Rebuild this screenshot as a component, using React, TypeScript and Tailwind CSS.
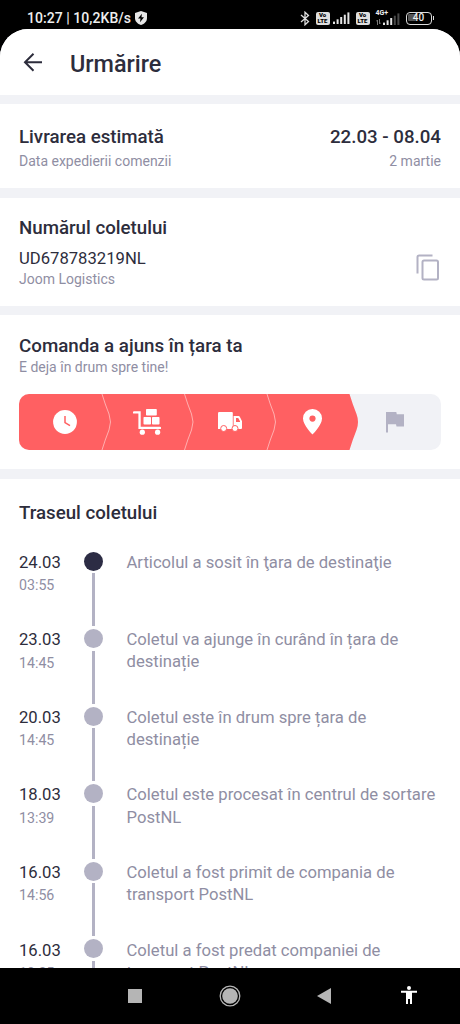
import React from 'react'

type TrackEvent = {
	date: string
	time: string
	text: string
	current?: boolean
}

const events: TrackEvent[] = [
	{ date: '24.03', time: '03:55', text: 'Articolul a sosit în ţara de destinaţie', current: true },
	{ date: '23.03', time: '14:45', text: 'Coletul va ajunge în curând în țara de destinație' },
	{ date: '20.03', time: '14:45', text: 'Coletul este în drum spre țara de destinație' },
	{ date: '18.03', time: '13:39', text: 'Coletul este procesat în centrul de sortare PostNL' },
	{ date: '16.03', time: '14:56', text: 'Coletul a fost primit de compania de transport PostNL' },
	{ date: '16.03', time: '10:35', text: 'Coletul a fost predat companiei de transport PostNL' },
]

const VoLte = () => (
	<div className="flex h-[13px] w-[14px] flex-col items-center justify-center rounded-[2px] bg-[#dedede] text-[6px] leading-[6px] font-black text-black">
		<span>Vo</span>
		<span>LTE</span>
	</div>
)

const Signal = ({ level }: { level: number }) => (
	<svg className="h-3 w-[17px]" viewBox="0 0 17 12" fill="#e4e4e4">
		{[0, 1, 2, 3, 4].map((i) => (
			<rect key={i} x={i * 3.6} y={9.6 - i * 2.3} width="2" height={2.4 + i * 2.3} opacity={i < level ? 1 : 0.32} />
		))}
	</svg>
)

const StatusBar = () => (
	<div className="flex h-[29px] items-end justify-between pr-[26px] pl-[27px] text-[#eee]">
		<div className="flex h-[22px] items-center">
			<span className="w-[104px] text-[14px] leading-4 font-medium whitespace-nowrap tracking-[0.05px]">10:27 | 10,2KB/s</span>
			<svg className="ml-[4px] h-[14px] w-3" viewBox="0 0 12 14">
				<path d="M6 0 12 2v5c0 3.500-2.500 5.800-6 7C2.500 12.800 0 10.500 0 7V2z" fill="#e8e8e8" />
				<path d="M6.900 2.800 3 7.600h2.500L5 11.200l4-5H6.500z" fill="#000" />
			</svg>
		</div>
		<div className="flex h-[22px] items-center">
			<svg className="mr-[2px] h-[15px] w-[10px]" viewBox="0 0 10 15" fill="none" stroke="#ddd" strokeWidth="1.300">
				<path d="M1 4l7.500 6.500L5 13.800V1.200l3.500 3.300L1 11" />
			</svg>
			<div className="ml-[4px]"><VoLte /></div>
			<div className="ml-[3px]"><Signal level={5} /></div>
			<div className="ml-[6px]"><VoLte /></div>
			<div className="relative ml-[6px] flex h-4 w-6 items-end justify-end">
				<span className="absolute top-0 left-0 text-[7px] leading-[6px] font-bold">4G+</span>
				<svg className="absolute bottom-[1px] left-0 h-1.5 w-[5px]" viewBox="0 0 5 6" stroke="#777" strokeWidth="1" fill="none">
					<path d="M1.500 6V1L0 2.500M3.500 0v5L5 3.500" />
				</svg>
				<div className="flex pb-px"><Signal level={3} /></div>
			</div>
			<div className="ml-[6px] flex items-center">
				<div className="relative flex h-[13px] w-[26px] items-center justify-center rounded-[4px] border-[1.5px] border-[#ddd]">
					<span className="absolute top-[1.5px] left-[1.5px] h-[7px] w-2 rounded-[1px] bg-[#555]" />
					<span className="relative text-[10px] leading-none font-medium">40</span>
				</div>
				<span className="ml-px h-1 w-[1.5px] bg-[#ddd]" />
			</div>
		</div>
	</div>
)

const Clock = () => (
	<svg className="size-6" viewBox="0 0 24 24">
		<circle cx="12" cy="12" r="11.900" fill="#fff" />
		<path d="M12 6v6.700l5 3" fill="none" stroke="#ff6062" strokeWidth="1.500" />
	</svg>
)

const Cart = () => (
	<svg className="h-[26px] w-7" viewBox="0 0 28 26" fill="#fff">
		<path d="M1 2.300h6.700V17.800H27a1 1 0 0 1 0 2.300H5.400V4.600H1a1 1 0 0 1 0-2.300z" />
		<rect x="13" y="0" width="10.800" height="6.500" rx=".8" />
		<rect x="10.500" y="8" width="7.500" height="7.500" rx=".8" />
		<rect x="19" y="8" width="7.500" height="7.500" rx=".8" />
		<circle cx="9.300" cy="23.200" r="2.600" />
		<circle cx="24.600" cy="23.200" r="2.600" />
	</svg>
)

const Truck = () => (
	<svg className="h-5 w-6" viewBox="0 0 24 20" fill="#fff">
		<path d="M1.200 0h12.600q1 0 1 1v16H0V1.200Q0 0 1.200 0z" />
		<path d="M15.600 4h5q.8 0 1.200.7l1.900 3.700q.3.500.3 1.100V16q0 1-1 1h-7.400z" />
		<path d="M18 6h2.200l1.800 3.300V10h-4z" fill="#ff6062" />
		<circle cx="5.700" cy="16.500" r="3" stroke="#ff6062" strokeWidth="1" />
		<circle cx="17" cy="16.500" r="3" stroke="#ff6062" strokeWidth="1" />
	</svg>
)

const Pin = () => (
	<svg className="h-[26px] w-[19px]" viewBox="0 0 19 26">
		<path d="M9.500 0A9.400 9.400 0 0 0 0 9.500C0 16.300 9.500 25.500 9.500 25.500S19 16.300 19 9.500A9.400 9.400 0 0 0 9.500 0z" fill="#fff" />
		<circle cx="9.500" cy="9.600" r="3.100" fill="#ff6062" />
	</svg>
)

const Flag = () => (
	<svg className="h-[21px] w-[18px]" viewBox="0 0 18 21" fill="#b3b2c4">
		<path d="M0 0h10.300l.5 2.200H18v12.300h-7.500l-.5-2.300H2V20.500H0z" />
	</svg>
)

const Progress = () => (
	<div className="relative mt-4 h-14 overflow-hidden rounded-[10px] bg-[#f1f2f6]">
		<svg className="absolute inset-0 h-14 w-[422px]" viewBox="0 0 422 56">
			<path d="M0 0H330.500Q333.500 10 337.500 20Q340.500 28 337.500 36Q333.500 46 330.500 56H0z" fill="#ff6062" />
			<g fill="none" stroke="#ffb0b0" strokeWidth="1">
				<path d="M83 0Q86 10 90 20Q93 28 90 36Q86 46 83 56" />
				<path d="M165.500 0Q168.500 10 172.500 20Q175.500 28 172.500 36Q168.500 46 165.500 56" />
				<path d="M248 0Q251 10 255 20Q258 28 255 36Q251 46 248 56" />
			</g>
		</svg>
		<div className="relative grid h-14 grid-cols-[82.600px_82.600px_82.600px_82.600px_82.600px] pl-[4.500px]">
			{[Clock, Cart, Truck, Pin, Flag].map((Icon, i) => (
				<div key={i} className="flex items-center justify-center"><Icon /></div>
			))}
		</div>
	</div>
)

const Row = ({ date, time, text, current }: TrackEvent) => (
	<li className="flex h-[77.600px] shrink-0">
		<div className="w-[65px] pt-[1.600px]">
			<p className="text-[16.650px] leading-[22px] text-[#2d2d3c]">{date}</p>
			<p className="mt-[0.500px] text-[14.200px] leading-[22px]">{time}</p>
		</div>
		<div className="flex w-[19px] flex-col items-center pt-[1.500px]">
			<span className={`size-[19px] shrink-0 rounded-full ${current ? 'bg-[#2c2c44]' : 'bg-[#b3b2c4]'}`} />
			<span className="mt-[2.500px] h-[53px] w-[2.500px] shrink-0 bg-[#b3b2c4]" />
		</div>
		<p className="w-[338px] shrink-0 pt-[1.600px] pl-[23.500px] text-[16.650px] leading-[22.200px]">{text}</p>
	</li>
)

const App = () => {
	return (
		<div className="flex h-[1024px] w-[460px] flex-col overflow-hidden bg-black font-['Roboto',sans-serif] text-[#8f8ea3]">
			<StatusBar />
			<main className="flex h-[939px] flex-col overflow-hidden rounded-t-[28px] bg-[#f1f2f6]">
				<header className="flex h-[66px] shrink-0 items-center bg-white pl-[23px]">
					<svg className="h-5 w-5" viewBox="0 0 20 20" fill="none" stroke="#2d2d3c" strokeWidth="2">
						<path d="M19 10.300H2M10.500 1.800 2 10.300l8.500 8.500" />
					</svg>
					<h1 className="ml-[27px] pt-[5px] text-[23.400px] font-medium text-[#2d2d3c]">Urmărire</h1>
				</header>

				<section className="mt-[9px] flex h-[84px] shrink-0 justify-between bg-white px-[19px] pt-[21px]">
					<div>
						<h2 className="text-[18.700px] leading-6 font-medium text-[#2d2d3c]">Livrarea estimată</h2>
						<p className="mt-px text-[14px] leading-[22px]">Data expedierii comenzii</p>
					</div>
					<div className="text-right">
						<p className="text-[18.700px] leading-6 font-medium text-[#2d2d3c]">22.03 - 08.04</p>
						<p className="mt-px text-[14px] leading-[22px]">2 martie</p>
					</div>
				</section>

				<section className="mt-[10px] flex h-[108px] shrink-0 justify-between bg-white px-[19px] pt-[17.500px]">
					<div>
						<h2 className="text-[18.700px] leading-6 font-medium text-[#2d2d3c]">Numărul coletului</h2>
						<p className="mt-[8px] text-[16.650px] leading-[22px] text-[#2d2d3c]">UD678783219NL</p>
						<p className="-mt-px text-[14px] leading-5">Joom Logistics</p>
					</div>
					<svg className="mt-[38px] mr-[2.500px] h-[27px] w-[23px]" viewBox="0 0 23 27" fill="none" stroke="#b3b2c4" strokeWidth="2">
						<path d="M1.500 19.500V3Q1.500 1.500 3 1.500H16.500" />
						<rect x="6.500" y="6.500" width="15.500" height="19" rx="1.500" />
					</svg>
				</section>

				<section className="mt-[9px] h-[154px] shrink-0 bg-white px-[19px] pt-[19px]">
					<h2 className="text-[18.750px] leading-6 font-medium text-[#2d2d3c]">Comanda a ajuns în țara ta</h2>
					<p className="-mt-px text-[14px] leading-[21px]">E deja în drum spre tine!</p>
					<Progress />
				</section>

				<section className="mt-[9.500px] flex min-h-0 flex-1 flex-col overflow-hidden bg-white px-[19px] pt-[22.500px]">
					<h2 className="shrink-0 text-[18.700px] leading-6 font-medium text-[#2d2d3c]">Traseul coletului</h2>
					<ul className="mt-[25px]">
						{events.map((event, i) => (
							<Row key={i} {...event} />
						))}
					</ul>
				</section>
			</main>

			<nav className="flex h-14 items-center">
				<div className="ml-[127.500px] flex w-[15px]"><span className="size-[14px] bg-[#b5b5b5]" /></div>
				<svg className="ml-[76px] size-[22px]" viewBox="0 0 22 22">
					<circle cx="11" cy="11" r="9.800" fill="none" stroke="#b5b5b5" strokeWidth="1.300" />
					<circle cx="11" cy="11" r="7.800" fill="#b5b5b5" />
				</svg>
				<svg className="ml-[76px] h-4 w-[14px]" viewBox="0 0 14 16" fill="#b5b5b5">
					<path d="M0 8 14 0v16z" />
				</svg>
				<svg className="-mt-0.5 ml-[70px] h-[18px] w-4" viewBox="0 0 16 18" fill="#fff">
					<circle cx="8" cy="2" r="2" />
					<path d="M0 4.700h16v2h-5V18H9v-5H7v5H5V6.700H0z" />
				</svg>
			</nav>
		</div>
	)
}

export default App
